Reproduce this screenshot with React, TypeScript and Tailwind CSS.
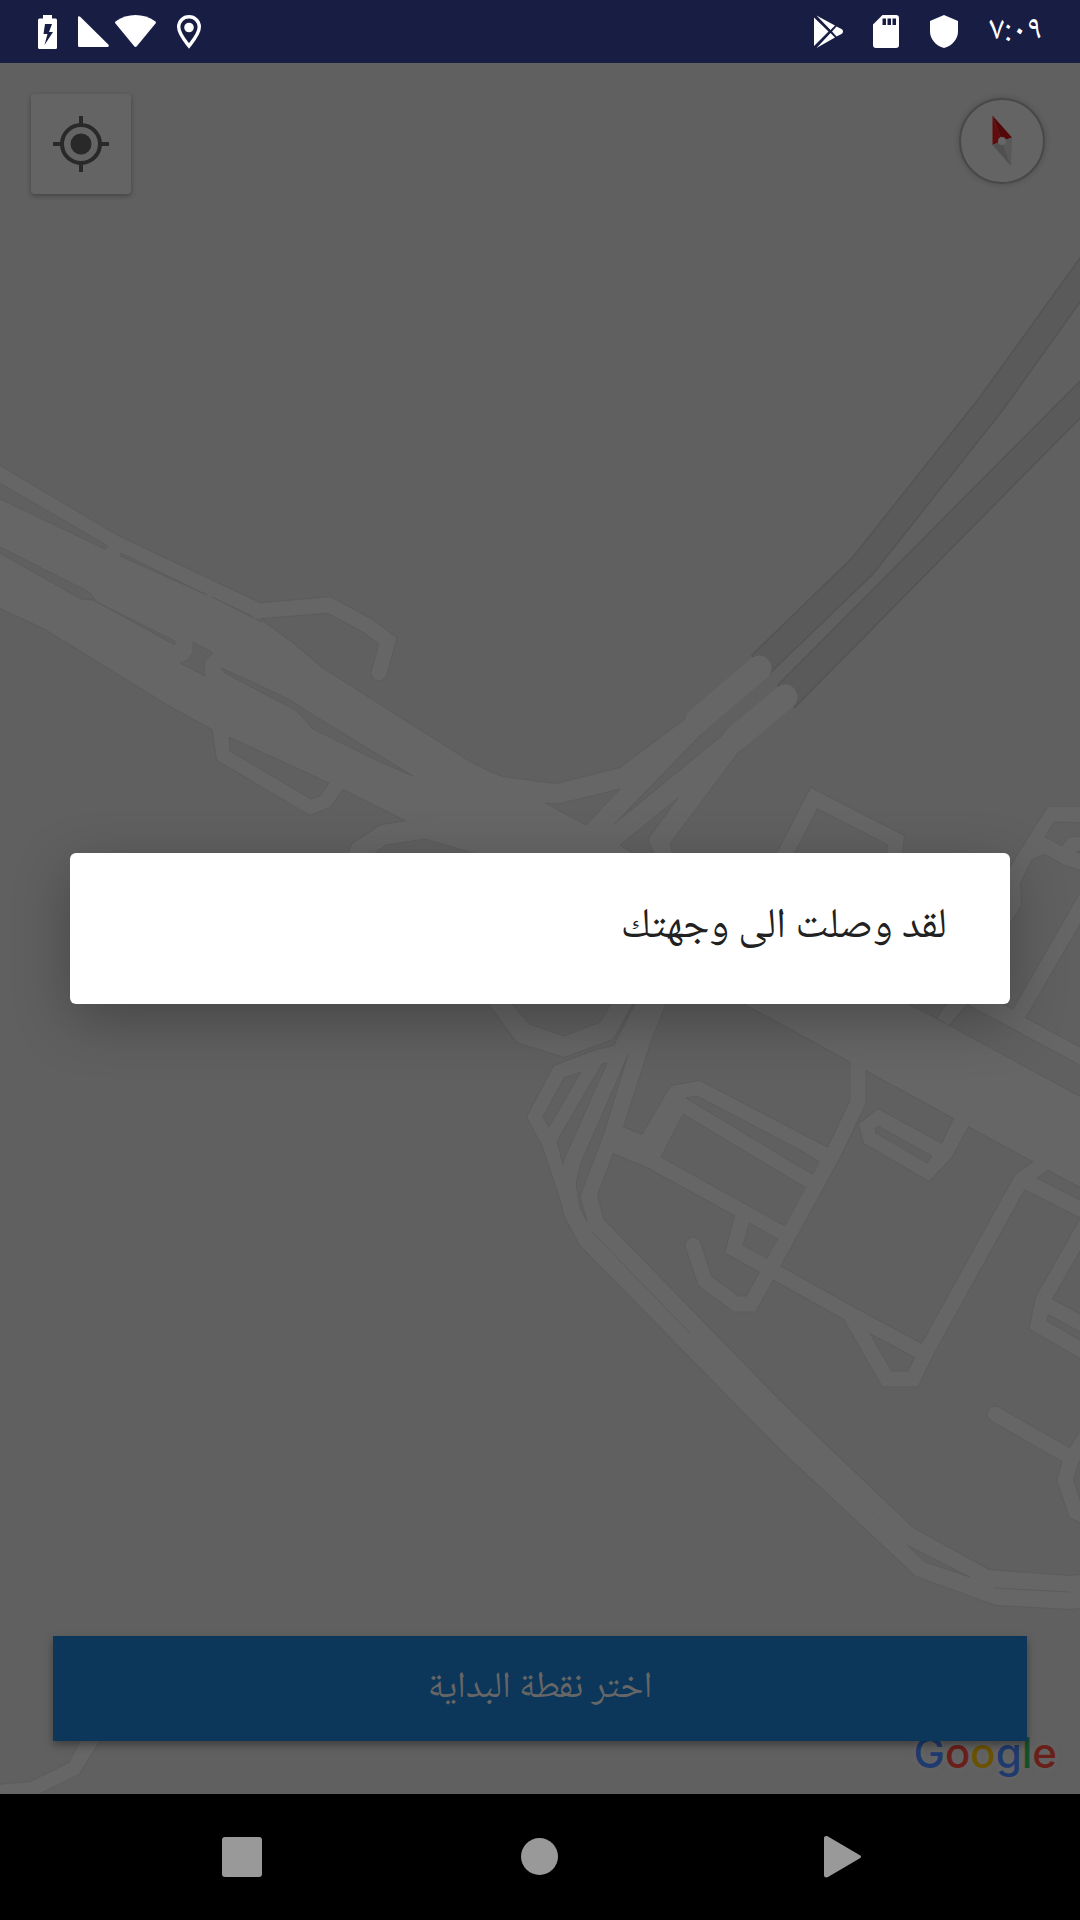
const GROUND = '#606060';
const ROAD = '#666666';
const EDGE = '#5c5c5c';

const roadAreas = [
  '0,466 118,536 262,604 260,619 295,645 322,668 470,762 490,772 503,777 540,782 556,784 620,768 687,718 708,730 701,734 611,827 722,736 726,730 743,750 739,751 670,843 675,870 909,1004 1080,1097 1080,1187 1034,1162 745,1004 600,940 407,821 343,789 212,729 170,706 45,629 0,608',
  '212,725 217,760 310,815 330,807 345,786',
  '440,815 407,821 381,825 352,844 340,875 480,880',
  '489,1004 517,1042 564,1057 613,1039 640,990 480,990',
  '673,985 650,1043 623,1127 613,1153 597,1195 603,1219 780,1401 913,1528 989,1570 1069,1576 1080,1575 1080,1608 1070,1609 996,1605 916,1576 780,1449 580,1245 564,1215 561,1201 543,1147 527,1117 554,1066 596,1050 614,1046 645,985',
  '612,1124 623,1127 642,1135 671,1086 700,1081 830,1149 792,1229 778,1241 736,1216 647,1167 613,1153 604,1151',
  '954,1118 942,1144 878,1109 859,1124 864,1143 929,1181 951,1158 969,1125',
  '1090,807 1048,807 1020,851 1000,885 1000,942 1012,920 1021,905 1020,883 1032,859 1045,854 1063,864 1090,873',
  '1090,876 1013,1010 985,995 960,995 945,1006 937,1018 949,1025 967,1004 1090,1070 1090,1053 1025,1018 1090,906',
  '84,1735 69,1763 30,1782 -2,1785 -2,1800 30,1798 79,1774 103,1735',
];

const roadLines = [
  '257,611 329,605 368,626 388,641 379,673',
  '782,860 814,798 896,840 894,862',
  '858,1060 858,1102 833,1154 751,1304 736,1304 705,1281 693,1245',
  '743,1215 734,1249 852,1315 925,1354',
  '1042,1165 1021,1180 927,1350 913,1379 887,1379 852,1318',
  '1025,1181 1090,1214',
  '1090,1217 1043,1300 1038,1325 1090,1355',
  '1043,1303 1090,1328',
  '995,1414 1070,1457',
  '1090,1430 1071,1460 1065,1480 1076,1512 1095,1521',
];

const islands = [
  '-2,482 108,546 105,549 -2,498',
  '121,553 120,556 207,595',
  '212,597 258,619 262,622',
  '-2,546 89,592 97,602 175,641 175,645 93,600 81,599 -2,552',
  '193,642 213,653 204,661 205,676 180,663 188,660 193,652',
  '221,668 244,678 290,700 315,716 413,776 380,762 313,729 297,711 225,673',
  '229,737 230,751 311,799 320,796 329,783',
  '545,803 558,804 620,789 586,825',
  '678,798 620,845 640,858 655,858 648,839',
  '368,858 386,845 425,839 490,858',
  '505,990 512,1004 529,1024 564,1036 600,1022 620,990',
  '543,1117 564,1078 581,1072 549,1127',
  '557,1141 602,1064 607,1063 565,1157 563,1164',
  '628,1055 581,1163 576,1183 580,1208 587,1221 580,1196 604,1133',
  '686,1098 697,1096 800,1150 821,1163 813,1174 800,1167',
  '683,1114 806,1188 785,1226 661,1157',
  '749,1223 778,1239 767,1259 743,1245',
  '875,1128 878,1126 932,1156 927,1163 876,1133',
  '907,1545 970,1577 925,1562',
  '1054,822 1090,823 1090,836 1068,837 1062,846 1045,837',
  '1086,849 1076,852 1086,855',
  '880,990 937,1018 954,990',
];

const tunnels = [
  '1085,251 980,397 852,558 752,655 768,675 872,575 1002,411 1085,295',
  '1085,376 778,685 795,707 1085,413',
];

function MapCanvas() {
  return (
    <svg
      className="absolute inset-0 h-full w-full"
      viewBox="0 63 1080 1731"
      preserveAspectRatio="xMidYMid slice"
      aria-hidden="true"
    >
      <rect x="0" y="63" width="1080" height="1731" fill={GROUND} />
      {tunnels.map((p) => (
        <polygon key={p} points={p} fill="#5a5a5a" stroke="#545454" strokeWidth="1.5" />
      ))}
      <g fill="none" stroke={EDGE} strokeLinecap="round" strokeWidth="17">
        {roadLines.map((p) => (
          <polyline key={p} points={p} />
        ))}
      </g>
      <g fill={EDGE} stroke={EDGE} strokeWidth="2">
        {roadAreas.map((p) => (
          <polygon key={p} points={p} />
        ))}
      </g>
      <g fill={ROAD}>
        {roadAreas.map((p) => (
          <polygon key={p} points={p} />
        ))}
      </g>
      <g fill={GROUND} stroke={EDGE} strokeWidth="1">
        {islands.map((p) => (
          <polygon key={p} points={p} />
        ))}
      </g>
      <g fill="none" stroke={ROAD} strokeLinecap="round" strokeWidth="15">
        {roadLines.map((p) => (
          <polyline key={p} points={p} />
        ))}
      </g>
      <g fill="none" stroke={ROAD} strokeLinecap="round" strokeWidth="25">
        <path d="M698 720 759 668M735 739 785 697" />
      </g>
      <g fill="none" stroke={EDGE} strokeWidth="1">
        <path d="M592 1232 690 1333M995 1588 1070 1592" />
        <path d="M780 1427 880 1520" opacity="0.3" />
      </g>
    </svg>
  );
}

function StatusBar() {
  return (
    <header className="flex h-[63px] shrink-0 items-center justify-between bg-[#181d44] pr-[38px] pl-[38px] text-white">
      <div className="flex items-center">
        <svg className="h-[34px] w-[19px]" viewBox="0 0 19 34" fill="currentColor" aria-label="Battery charging">
          <path
            fillRule="evenodd"
            d="M5 0h9v3.500h3.500A1.500 1.500 0 0 1 19 5v27.500a1.500 1.500 0 0 1-1.500 1.500h-16A1.500 1.500 0 0 1 0 32.500V5a1.500 1.500 0 0 1 1.500-1.500H5zM7 9 5.500 19H9.500L6.500 30 15 17h-4l3-8z"
          />
        </svg>
        <svg className="ml-[21px] h-[32px] w-[31px]" viewBox="0 0 31 32" fill="currentColor" aria-label="Signal">
          <path d="M0 1.500C0 .2 1.200-.2 2.200.8L30.300 28.500c1 1.200.7 2.500-.8 2.500H1.500A1.500 1.500 0 0 1 0 29.500z" />
        </svg>
        <svg className="ml-[6px] h-[33px] w-[41px]" viewBox="0 0 41 33" fill="currentColor" aria-label="Wi-Fi">
          <path d="M.5 8.500C-.2 7.500 0 6.800.8 6.200 12.500-2 28.500-2 40.200 6.200c.8.600 1 1.300.3 2.300L22 31c-1 1.200-2 1.200-3 0z" />
        </svg>
        <svg className="ml-[21px] h-[34px] w-[24px]" viewBox="0 0 24 34" aria-label="Location">
          <path
            d="M12 1.700C6.200 1.700 1.700 6.200 1.700 12c0 6.500 6 13.500 10.300 19 4.300-5.500 10.300-12.500 10.300-19C22.300 6.200 17.800 1.700 12 1.700z"
            fill="none"
            stroke="currentColor"
            strokeWidth="3.400"
          />
          <circle cx="12" cy="12.500" r="4.800" fill="currentColor" />
        </svg>
      </div>
      <div className="flex items-center">
        <svg className="h-[33px] w-[30px]" viewBox="0 0 30 33" fill="currentColor" aria-label="Play Store">
          <path d="M0 2.500 14.500 16.500 0 31zM2.500.5 21 10.500 16.500 15zM22.500 11.500 27.500 14c2 1.200 2 3.800 0 5L22.500 21.500 18 16.500zM16.500 18 21 22.500 2.500 33z" />
        </svg>
        <svg className="ml-[29px] h-[33px] w-[26px]" viewBox="0 0 26 33" fill="currentColor" aria-label="SD card">
          <path
            fillRule="evenodd"
            d="M9.500 0H23a3 3 0 0 1 3 3v27a3 3 0 0 1-3 3H3a3 3 0 0 1-3-3V9.500zM9.500 3.500v6.500h3.500V3.500zM14.500 3.500v6.500H18V3.500zM19.500 3.500v6.500H23V3.500z"
          />
        </svg>
        <svg className="ml-[31px] h-[33px] w-[28px]" viewBox="0 0 28 33" fill="currentColor" aria-label="Shield">
          <path d="M14 0 28 6v10.500C28 24 22 31 14 33 6 31 0 24 0 16.500V6z" />
        </svg>
        <time dir="ltr" className="ml-[31px] text-[34px] leading-none">
          ٧:٠٩
        </time>
      </div>
    </header>
  );
}

function GoogleMark() {
  return (
    <div
      dir="ltr"
      className="absolute right-[23px] bottom-[20px] flex font-['Inter',sans-serif] text-[42px] leading-none font-medium [text-shadow:0_0_6px_#686868]"
    >
      <span className="text-[#1e3a6e]">G</span>
      <span className="text-[#691f1a]">o</span>
      <span className="text-[#6b5200]">o</span>
      <span className="text-[#1e3a6e]">g</span>
      <span className="text-[#15502a]">l</span>
      <span className="text-[#691f1a]">e</span>
    </div>
  );
}

function NavBar() {
  return (
    <nav className="flex h-[126px] shrink-0 items-center justify-center bg-black text-[#999999]">
      <button type="button" aria-label="Recents" className="flex h-full w-[300px] items-center justify-center">
        <svg className="size-12" viewBox="0 0 48 48" fill="currentColor">
          <rect x="6" y="4" width="40" height="40" rx="3" />
        </svg>
      </button>
      <button type="button" aria-label="Home" className="flex h-full w-[300px] items-center justify-center">
        <svg className="size-12" viewBox="0 0 48 48" fill="currentColor">
          <circle cx="23.500" cy="23.500" r="18.500" />
        </svg>
      </button>
      <button type="button" aria-label="Back" className="flex h-full w-[300px] items-center justify-center">
        <svg className="size-12" viewBox="0 0 48 48" fill="currentColor">
          <path d="M8 5.500C8 3 10 2.500 12 3.500L43.500 22c2 1 2 2.500 0 3.500L12 44c-2 1-4 .5-4-2z" />
        </svg>
      </button>
    </nav>
  );
}

export default function App() {
  return (
    <div className="flex min-h-screen flex-col font-['Noto_Naskh_Arabic','Noto_Sans_Arabic','DejaVu_Sans',sans-serif]">
      <StatusBar />
      <main className="relative flex flex-1 flex-col justify-between overflow-hidden bg-[#606060]">
        <MapCanvas />
        <GoogleMark />
        <div className="relative flex items-start justify-between pt-[31px] pr-[35px] pl-[31px]">
          <button
            type="button"
            aria-label="My location"
            className="flex size-[100px] items-center justify-center rounded-[4px] bg-[#646464] shadow-[0_2px_5px_rgba(0,0,0,0.3)]"
          >
            <svg className="size-14" viewBox="0 0 56 56" fill="none" stroke="#292929">
              <circle cx="28" cy="28" r="19" strokeWidth="4" />
              <circle cx="28" cy="28" r="10.500" fill="#292929" stroke="none" />
              <path strokeWidth="4" d="M28 0v8M28 48v8M0 28h8M48 28h8" />
            </svg>
          </button>
          <button
            type="button"
            aria-label="Compass"
            className="mt-1 flex size-[86px] items-center justify-center rounded-full border-2 border-[#484848] bg-[#646464] shadow-[0_0_6px_rgba(0,0,0,0.2)]"
          >
            <svg className="h-[52px] w-[20px]" viewBox="0 0 20 52">
              <path d="M.5.500 20 22.500 10 26z" fill="#530909" />
              <path d="M.5.500 10 26 .5 30z" fill="#620d0d" />
              <path d="M.5 30 10 26 19 51z" fill="#505050" />
              <path d="M10 26 20 22.500 19 51z" fill="#595959" />
              <circle cx="10" cy="26" r="4" fill="#666666" />
            </svg>
          </button>
        </div>
        <button
          type="button"
          dir="rtl"
          className="relative mx-[53px] mb-[53px] h-[105px] bg-[#0c365a] text-[37px] text-[#666666] shadow-[0_4px_8px_rgba(0,0,0,0.35)]"
        >
          اختر نقطة البداية
        </button>
        <div className="absolute inset-0 flex items-center">
          <div
            role="dialog"
            dir="rtl"
            className="mx-[70px] flex h-[151px] flex-1 items-center rounded-[6px] bg-white px-[63px] shadow-[0_16px_56px_rgba(0,0,0,0.28)]"
          >
            <p className="text-[42px] text-[#212121]">لقد وصلت الى وجهتك</p>
          </div>
        </div>
      </main>
      <NavBar />
    </div>
  );
}
